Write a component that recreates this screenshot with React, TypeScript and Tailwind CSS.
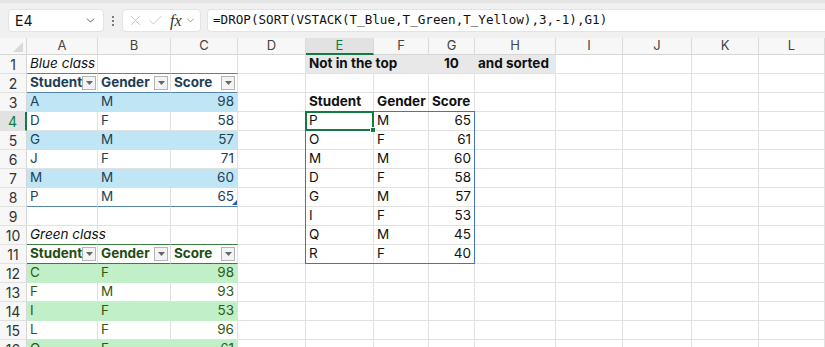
import React from 'react';
import { ChevronDown, X, Check } from 'lucide-react';

const COLS = ['A', 'B', 'C', 'D', 'E', 'F', 'G', 'H', 'I', 'J', 'K', 'L'];
const COL_W = ['w-[71px]', 'w-[73px]', 'w-[67px]', 'w-[68px]', 'w-[68px]', 'w-[55px]', 'w-[46px]', 'w-[81px]', 'w-[67px]', 'w-[69px]', 'w-[67px]', 'w-[66px]'];

type Cell = {
  v?: string;
  right?: boolean;
  center?: boolean;
  bold?: boolean;
  italic?: boolean;
  bg?: string; // full class set for bg + border colour
  bottom?: string; // bottom border class
  text?: string;
  filter?: boolean;
};

const BLUE = 'bg-[#c0e6f5] border-r-[#c0e6f5]';
const GREEN = 'bg-[#c1f0c8] border-r-[#c1f0c8]';
const GRAY = 'bg-[#e8e8e8] border-r-[#e8e8e8]';
const BLUE_LINE = 'border-b-[#5585a8]';
const GREEN_LINE = 'border-b-[#3b7d3f]';
const BLUE_TXT = 'text-[#1c4257]';
const GREEN_TXT = 'text-[#2f5a14]';

const blueRow = (s: string, g: string, n: string, band: boolean, last = false): Cell[] => [
  { v: s, text: BLUE_TXT, bg: band ? BLUE : undefined, bottom: last ? BLUE_LINE : band ? 'border-b-[#c0e6f5]' : undefined },
  { v: g, text: BLUE_TXT, bg: band ? BLUE : undefined, bottom: last ? BLUE_LINE : band ? 'border-b-[#c0e6f5]' : undefined },
  { v: n, right: true, text: BLUE_TXT, bg: band ? BLUE : undefined, bottom: last ? BLUE_LINE : band ? 'border-b-[#c0e6f5]' : undefined },
];

const greenRow = (s: string, g: string, n: string, band: boolean): Cell[] => [
  { v: s, text: GREEN_TXT, bg: band ? GREEN : undefined, bottom: band ? 'border-b-[#c1f0c8]' : undefined },
  { v: g, text: GREEN_TXT, bg: band ? GREEN : undefined, bottom: band ? 'border-b-[#c1f0c8]' : undefined },
  { v: n, right: true, text: GREEN_TXT, bg: band ? GREEN : undefined, bottom: band ? 'border-b-[#c1f0c8]' : undefined },
];

const spill = (s: string, g: string, n: string): Cell[] => [{ v: s }, { v: g }, { v: n, right: true }];

const header = (line: string, txt: string): Cell[] => [
  { v: 'Student', bold: true, filter: true, bottom: line, text: txt },
  { v: 'Gender', bold: true, filter: true, bottom: line, text: txt },
  { v: 'Score', bold: true, filter: true, bottom: line, text: txt },
];

const E: Cell = {};

const ROWS: Cell[][] = [
  [
    { v: 'Blue class', italic: true, bottom: BLUE_LINE },
    { bottom: BLUE_LINE },
    { bottom: BLUE_LINE },
    E,
    { v: 'Not in the top', bold: true, bg: GRAY },
    { bg: GRAY },
    { v: '10', bold: true, center: true, bg: GRAY },
    { v: 'and sorted', bold: true, bg: GRAY },
  ],
  [...header(BLUE_LINE, 'text-[#1c3f55]')],
  [...blueRow('A', 'M', '98', true), E, { v: 'Student', bold: true }, { v: 'Gender', bold: true }, { v: 'Score', bold: true }],
  [...blueRow('D', 'F', '58', false), E, ...spill('P', 'M', '65')],
  [...blueRow('G', 'M', '57', true), E, ...spill('O', 'F', '61')],
  [...blueRow('J', 'F', '71', false), E, ...spill('M', 'M', '60')],
  [...blueRow('M', 'M', '60', true), E, ...spill('D', 'F', '58')],
  [...blueRow('P', 'M', '65', false, true), E, ...spill('G', 'M', '57')],
  [E, E, E, E, ...spill('I', 'F', '53')],
  [
    { v: 'Green class', italic: true, bottom: GREEN_LINE },
    { bottom: GREEN_LINE },
    { bottom: GREEN_LINE },
    E,
    ...spill('Q', 'M', '45'),
  ],
  [...header(GREEN_LINE, 'text-[#1f4d12]'), E, ...spill('R', 'F', '40')],
  greenRow('C', 'F', '98', true),
  greenRow('F', 'M', '93', false),
  greenRow('I', 'F', '53', true),
  greenRow('L', 'F', '96', false),
  greenRow('O', 'F', '61', true),
];

const FilterBtn = () => (
  <span className="flex w-[14px] h-[14px] shrink-0 items-center justify-center border border-[#b5b5b5] bg-[#f4f4f4] mr-[2px]">
    <svg width="7" height="4" viewBox="0 0 7 4">
      <path d="M0 0h7L3.5 4z" fill="#666" />
    </svg>
  </span>
);

const GridCell: React.FC<{ cell: Cell; w: string }> = ({ cell, w }) => (
  <div
    className={`${w} h-[19px] shrink-0 border-r border-b border-[#e1e1e1] ${cell.bg ?? 'bg-white'} ${cell.bottom ?? ''} ${cell.text ?? 'text-[#111]'} flex items-center overflow-visible whitespace-nowrap text-[13.5px] leading-none ${cell.right ? 'justify-end pr-[3px]' : cell.center ? 'justify-center' : cell.filter ? 'justify-between pl-[3px]' : 'pl-[3px]'} ${cell.bold ? 'font-bold' : ''} ${cell.italic ? 'italic' : ''}`}
  >
    {cell.v && <span className="relative z-10">{cell.v}</span>}
    {cell.filter && <FilterBtn />}
  </div>
);

export default function App() {
  return (
    <div className="w-[825px] h-[347px] overflow-hidden bg-white font-['Inter',sans-serif] text-[#111]">
      {/* formula bar */}
      <div className="h-[38px] bg-[#f0f0f0] border-t-[3px] border-[#e4e4e4] flex items-center pl-[8px] gap-[6px]">
        <div className="w-[96px] h-[23px] bg-white rounded-[4px] border border-[#e3e3e3] flex items-center justify-between pl-[6px] pr-[6px] text-[14px]">
          <span>E4</span>
          <ChevronDown size={13} strokeWidth={1.6} className="text-[#444]" />
        </div>
        <div className="flex flex-col gap-[2px] px-[2px]">
          <span className="w-[2px] h-[2px] bg-[#555] rounded-full" />
          <span className="w-[2px] h-[2px] bg-[#555] rounded-full" />
          <span className="w-[2px] h-[2px] bg-[#555] rounded-full" />
        </div>
        <div className="w-[79px] h-[23px] bg-white rounded-[4px] border border-[#e3e3e3] flex items-center pl-[4px] gap-[3px]">
          <X size={17} strokeWidth={1.1} className="text-[#bdbdbd]" />
          <Check size={17} strokeWidth={1.1} className="text-[#bdbdbd]" />
          <span className="font-['Liberation_Serif',serif] italic text-[16px] text-[#333] ml-[3px]">fx</span>
          <ChevronDown size={11} strokeWidth={1.4} className="text-[#666]" />
        </div>
        <div className="flex-1 h-[23px] bg-white rounded-l-[4px] border border-r-0 border-[#e3e3e3] flex items-center pl-[5px] font-['DejaVu_Sans_Mono',monospace] text-[12.6px] text-[#111]">
          =DROP(SORT(VSTACK(T_Blue,T_Green,T_Yellow),3,-1),G1)
        </div>
      </div>

      {/* sheet */}
      <div className="relative">
        <div className="flex h-[17px] bg-[#f7f7f7]">
          <div className="w-[27px] shrink-0 border-r border-b border-[#d6d6d6] relative">
            <svg className="absolute right-[3px] bottom-[2px]" width="10" height="10" viewBox="0 0 10 10">
              <path d="M10 0V10H0z" fill="#d9d9d9" />
            </svg>
          </div>
          {COLS.map((c, i) => (
            <div
              key={c}
              className={`${COL_W[i]} shrink-0 border-r border-[#dadada] flex items-center justify-center text-[13px] ${c === 'E' ? 'bg-[#e2e2e2] border-b-2 border-b-[#107c41] text-[#107c41]' : 'border-b border-b-[#d6d6d6] text-[#444]'}`}
            >
              {c}
            </div>
          ))}
        </div>
        {Array.from({ length: 16 }).map((_, r) => (
          <div key={r} className="flex">
            <div
              className={`w-[27px] h-[19px] shrink-0 border-b border-[#e1e1e1] flex items-center justify-center text-[14px] ${r === 3 ? 'bg-[#e2e2e2] border-r-2 border-r-[#107c41] text-[#107c41]' : 'bg-[#f7f7f7] border-r border-r-[#d6d6d6] text-[#333]'}`}
            >
              {r + 1}
            </div>
            {COLS.map((c, i) => (
              <GridCell key={c} cell={ROWS[r][i] ?? E} w={COL_W[i]} />
            ))}
          </div>
        ))}

        {/* spill range border */}
        <div className="absolute left-[305px] top-[73px] w-[170px] h-[153px] border border-[#4472c4] pointer-events-none" />
        {/* active cell */}
        <div className="absolute left-[305px] top-[73px] w-[69px] h-[20px] border-2 border-[#107c41] pointer-events-none">
          <div className="absolute -right-[4px] -bottom-[4px] w-[6px] h-[6px] bg-[#107c41] border border-white" />
        </div>
        {/* table resize handle */}
        <svg className="absolute left-[232px] top-[162px]" width="5" height="5" viewBox="0 0 5 5">
          <path d="M5 0V5H0z" fill="#2f5ea8" />
        </svg>
      </div>
    </div>
  );
}
